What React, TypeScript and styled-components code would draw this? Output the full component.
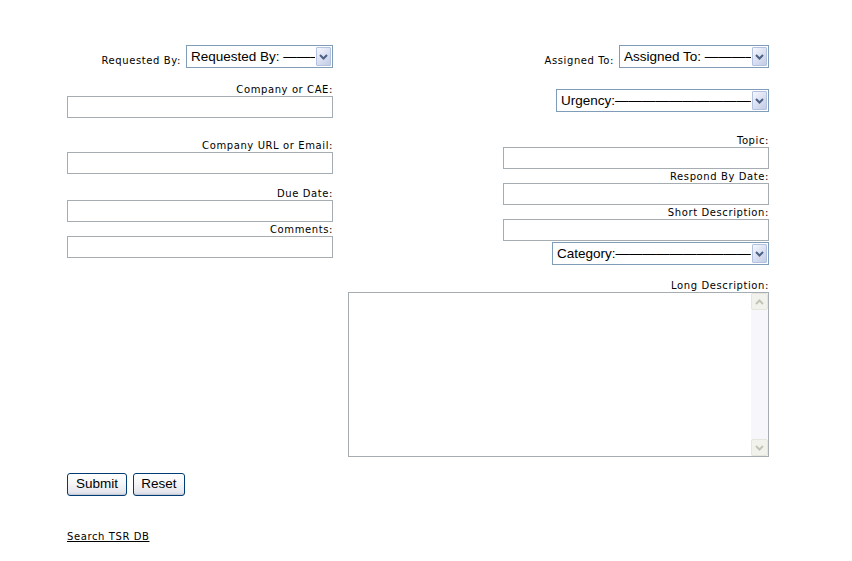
import React from "react";
import styled, { createGlobalStyle } from "styled-components";

const GlobalStyle = createGlobalStyle`
  body {
    margin: 0;
    background: #ffffff;
    color: #000000;
    font-family: "DejaVu Sans", Verdana, sans-serif;
  }
`;

const DASHES = "——————————————————————";

function Chevron({ color }: { color: string }) {
  return (
    <svg width="9" height="6" viewBox="0 0 9 6">
      <path d="M1 1 L4.5 4.5 L8 1" fill="none" stroke={color} strokeWidth="2" />
    </svg>
  );
}

function ComboBox({ width, text }: { width: number; text: string }) {
  return (
    <StyledCombo $width={width}>
      <StyledSelect defaultValue="">
        <option value="">{text}</option>
      </StyledSelect>
      <StyledComboArrow>
        <Chevron color="#4d6185" />
      </StyledComboArrow>
    </StyledCombo>
  );
}

function TextField({ label, top }: { label: string; top: number }) {
  return (
    <StyledField $top={top}>
      <StyledLabel>{label}</StyledLabel>
      <StyledInput type="text" />
    </StyledField>
  );
}

function App() {
  return (
    <>
      <GlobalStyle />
      <StyledRoot>
        <StyledForm>
          <StyledLeft>
            <StyledSelectRow>
              <StyledInlineLabel>Requested By:</StyledInlineLabel>
              <ComboBox width={147} text={"Requested By: " + DASHES} />
            </StyledSelectRow>
            <TextField label="Company or CAE:" top={16} />
            <TextField label="Company URL or Email:" top={22} />
            <TextField label="Due Date:" top={14} />
            <TextField label="Comments:" top={2} />
          </StyledLeft>

          <StyledRight>
            <StyledSelectRow>
              <StyledInlineLabel>Assigned To:</StyledInlineLabel>
              <ComboBox width={150} text={"Assigned To: " + DASHES} />
            </StyledSelectRow>
            <StyledSpacer $top={21}>
              <ComboBox width={213} text={"Urgency:" + DASHES} />
            </StyledSpacer>
            <TextField label="Topic:" top={23} />
            <TextField label="Respond By Date:" top={2} />
            <TextField label="Short Description:" top={2} />
            <StyledSpacer $top={1}>
              <ComboBox width={217} text={"Category:" + DASHES} />
            </StyledSpacer>
            <StyledWideField>
              <StyledLabel>Long Description:</StyledLabel>
              <StyledTextAreaBox>
                <StyledTextArea />
                <StyledScrollBar>
                  <StyledScrollButton>
                    <svg width="9" height="6" viewBox="0 0 9 6">
                      <path d="M1 5 L4.5 1.5 L8 5" fill="none" stroke="#c3c3b9" strokeWidth="2" />
                    </svg>
                  </StyledScrollButton>
                  <StyledScrollTrack />
                  <StyledScrollButton>
                    <Chevron color="#c3c3b9" />
                  </StyledScrollButton>
                </StyledScrollBar>
              </StyledTextAreaBox>
            </StyledWideField>
          </StyledRight>
        </StyledForm>

        <StyledButtons>
          <StyledButton type="submit" $width={60}>Submit</StyledButton>
          <StyledButton type="reset" $width={52}>Reset</StyledButton>
        </StyledButtons>

        <StyledLink href="#">Search TSR DB</StyledLink>
      </StyledRoot>
    </>
  );
}

export default App;

const StyledRoot = styled.main`
  display: flex;
  flex-direction: column;
  align-items: flex-start;

  padding: 45px 0 0 67px;
`;

const StyledForm = styled.form`
  display: flex;
  align-items: flex-start;
  gap: 15px;
`;

const StyledLeft = styled.div`
  width: 266px;

  display: flex;
  flex-direction: column;
  align-items: flex-end;
`;

const StyledRight = styled.div`
  width: 421px;

  display: flex;
  flex-direction: column;
  align-items: flex-end;
`;

const StyledSelectRow = styled.div`
  display: flex;
  align-items: flex-end;
  gap: 5px;

  height: 23px;
`;

const StyledInlineLabel = styled.span`
  font-size: 10px;
  letter-spacing: 0.6px;
  line-height: 12px;

  padding-bottom: 1px;
`;

const StyledSpacer = styled.div<{ $top: number }>`
  margin-top: ${({ $top }) => $top}px;
`;

const StyledCombo = styled.div<{ $width: number }>`
  width: ${({ $width }) => $width}px;
  height: 23px;
  box-sizing: border-box;

  display: flex;
  align-items: stretch;

  border: 1px solid #7f9db9;
  background: #ffffff;
`;

const StyledSelect = styled.select`
  flex: 1;
  min-width: 0;

  appearance: none;
  border: none;
  outline: none;
  background: transparent;

  font-family: "Liberation Sans", Arial, sans-serif;
  font-size: 13.5px;
  color: #000000;

  padding: 0 0 0 4px;
  margin: 0;
`;

const StyledComboArrow = styled.div`
  width: 15px;
  margin: 1px;
  box-sizing: border-box;

  display: flex;
  align-items: center;
  justify-content: center;

  border: 1px solid #b4c2e2;
  border-radius: 1px;
  background: linear-gradient(135deg, #f6f8fe 0%, #dbe1f2 50%, #c3cce6 100%);
`;

const StyledField = styled.div<{ $top: number }>`
  width: 266px;

  display: flex;
  flex-direction: column;

  margin-top: ${({ $top }) => $top}px;
`;

const StyledWideField = styled.div`
  width: 421px;

  display: flex;
  flex-direction: column;

  margin-top: 15px;
`;

const StyledLabel = styled.label`
  display: block;
  text-align: right;

  font-size: 10px;
  letter-spacing: 0.6px;
  line-height: 12px;
`;

const StyledInput = styled.input`
  width: 100%;
  height: 22px;
  box-sizing: border-box;

  border: 1px solid #a5acb2;
  outline: none;

  font-family: "Liberation Sans", Arial, sans-serif;
  font-size: 13.33px;

  margin: 0;
  padding: 0 3px;
`;

const StyledTextAreaBox = styled.div`
  height: 165px;
  box-sizing: border-box;

  display: flex;

  border: 1px solid #a5acb2;
  background: #ffffff;
`;

const StyledTextArea = styled.textarea`
  flex: 1;

  border: none;
  outline: none;
  resize: none;
  overflow: hidden;

  font-family: "Liberation Mono", monospace;
  font-size: 13px;

  margin: 0;
  padding: 2px;
`;

const StyledScrollBar = styled.div`
  width: 17px;

  display: flex;
  flex-direction: column;

  background: #fbfbf8;
`;

const StyledScrollTrack = styled.div`
  flex: 1;
  background: #f7f7fb;
`;

const StyledScrollButton = styled.div`
  width: 17px;
  height: 17px;
  box-sizing: border-box;

  display: flex;
  align-items: center;
  justify-content: center;

  border: 1px solid #e6e6de;
  border-radius: 2px;
  background: #f2f2ec;
`;

const StyledButtons = styled.div`
  display: flex;
  gap: 6px;

  margin-top: 16px;
`;

const StyledButton = styled.button<{ $width: number }>`
  width: ${({ $width }) => $width}px;
  height: 23px;
  box-sizing: border-box;

  border: 1px solid #003c74;
  border-radius: 3px;
  background: linear-gradient(#ffffff 0%, #f6f6f8 45%, #e6e7ee 85%, #d4d6e0 100%);
  box-shadow: inset 0 -1px 0 #c6c9d6, inset 0 1px 0 #ffffff;

  font-family: "Liberation Sans", Arial, sans-serif;
  font-size: 13.5px;
  color: #000000;

  padding: 0 0 2px;
  cursor: pointer;
`;

const StyledLink = styled.a`
  font-size: 10px;
  letter-spacing: 0.6px;
  line-height: 12px;
  color: #000000;
  text-decoration: underline;

  margin-top: 35px;
`;
